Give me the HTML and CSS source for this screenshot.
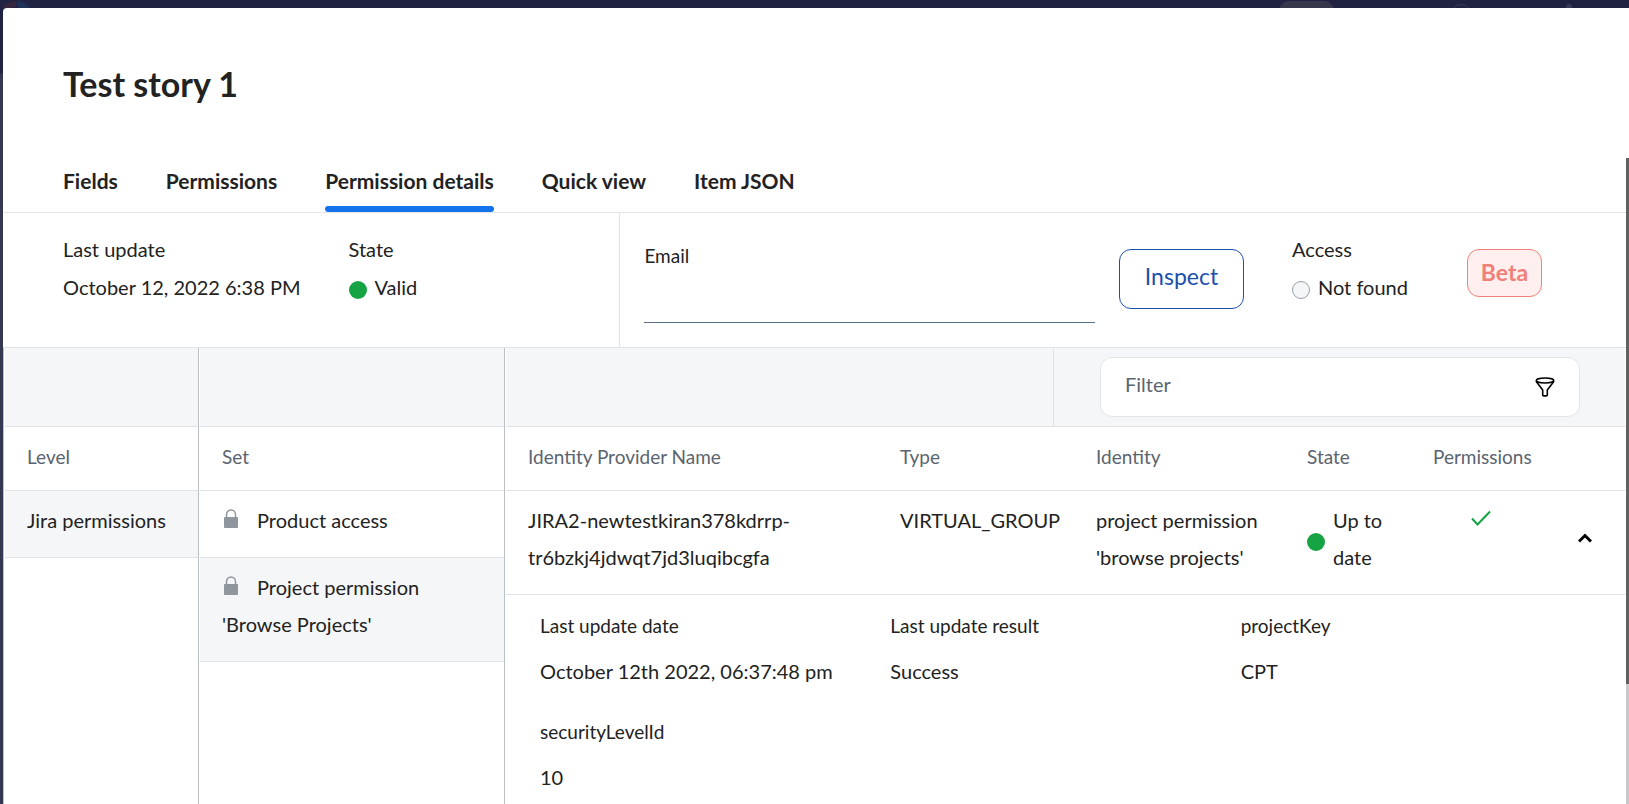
FILE: index.html
```html
<!DOCTYPE html>
<html lang="en">
<head>
<meta charset="utf-8">
<title>Test story 1</title>
<link rel="stylesheet" href="styles.css">
</head>
<body>
<div class="backdrop" aria-hidden="true">
  <svg class="logo" width="32" height="32" viewBox="0 0 32 32" fill="none" stroke-width="6"><path d="M16 4a14 14 0 0 0-13 9" stroke="#38253f"/><path d="M17 4a14 14 0 0 1 12 9" stroke="#1e3258"/></svg>
  <span class="pill"></span>
  <span class="ring"></span>
  <span class="knob"></span>
</div>
<main class="modal">
  <header class="modal-head">
    <h1 class="title">Test story 1</h1>
    <nav class="tabs">
      <button class="tab" type="button">Fields</button>
      <button class="tab" type="button">Permissions</button>
      <button class="tab tab-active" type="button">Permission details</button>
      <button class="tab" type="button">Quick view</button>
      <button class="tab" type="button">Item JSON</button>
    </nav>
  </header>

  <section class="summary">
    <div class="status">
      <div class="fact"><span>Last update</span><span>October 12, 2022 6:38 PM</span></div>
      <div class="fact"><span>State</span><span class="state"><i class="dot dot-ok"></i>Valid</span></div>
    </div>
    <form class="inspect">
      <div class="field">
        <label class="field-label" for="email">Email</label>
        <input class="field-input" id="email" type="email">
      </div>
      <button class="inspect-button" type="button">Inspect</button>
      <div class="fact access"><span>Access</span><span class="state"><i class="dot dot-none"></i>Not found</span></div>
      <span class="beta">Beta</span>
    </form>
  </section>

  <section class="panels">
    <div class="panel">
      <div class="toolbar"></div>
      <table class="grid">
        <thead><tr><th>Level</th></tr></thead>
        <tbody><tr class="selected"><td>Jira permissions</td></tr></tbody>
      </table>
    </div>

    <div class="panel">
      <div class="toolbar"></div>
      <table class="grid">
        <thead><tr><th>Set</th></tr></thead>
        <tbody>
          <tr><td><svg class="lock" viewBox="0 0 14 20" width="14" height="20"><rect x="0" y="8" width="14" height="11" rx="1" fill="#8f969e"/><path d="M2.5 8V5.5a4.500 4.500 0 0 1 9 0V8" fill="none" stroke="#8f969e" stroke-width="1.500"/></svg>Product access</td></tr>
          <tr class="selected"><td><svg class="lock" viewBox="0 0 14 20" width="14" height="20"><rect x="0" y="8" width="14" height="11" rx="1" fill="#8f969e"/><path d="M2.5 8V5.5a4.500 4.500 0 0 1 9 0V8" fill="none" stroke="#8f969e" stroke-width="1.500"/></svg>Project permission 'Browse Projects'</td></tr>
        </tbody>
      </table>
    </div>

    <div class="panel">
      <div class="toolbar">
        <div class="filter-area">
          <div class="filter">
            <input class="filter-input" type="text" placeholder="Filter" aria-label="Filter">
            <svg class="funnel" viewBox="0 0 20 20" width="20" height="20" fill="none" stroke="#000" stroke-width="1.600" stroke-linejoin="round"><ellipse cx="10" cy="3.500" rx="8.700" ry="2.500"/><path d="M1.300 4c0 1 .8 1.900 1.600 2.800L7.700 13v5c0 1.300 4.600 1.300 4.600 0v-5l4.800-6.200c.8-.9 1.600-1.800 1.600-2.800"/></svg>
          </div>
        </div>
      </div>
      <table class="grid identities">
        <colgroup><col><col class="c-type"><col class="c-identity"><col class="c-state"><col class="c-perm"><col class="c-toggle"></colgroup>
        <thead><tr><th>Identity Provider Name</th><th>Type</th><th>Identity</th><th>State</th><th>Permissions</th><th></th></tr></thead>
        <tbody>
          <tr>
            <td>JIRA2-newtestkiran378kdrrp-<br>tr6bzkj4jdwqt7jd3luqibcgfa</td>
            <td>VIRTUAL_GROUP</td>
            <td>project permission 'browse projects'</td>
            <td><span class="state"><i class="dot dot-ok"></i>Up to<br>date</span></td>
            <td class="granted"><svg viewBox="0 0 20 16" width="20" height="16" fill="none" stroke="#16a344" stroke-width="2"><path d="M1 8.500 6.500 14.500 19 1.500"/></svg></td>
            <td class="toggle-cell"><button class="toggle" type="button" aria-label="Collapse"><svg viewBox="0 0 14 10" width="14" height="10" fill="none" stroke="#000" stroke-width="3"><path d="M1 8.500 7 2.500l6 6"/></svg></button></td>
          </tr>
        </tbody>
      </table>
      <dl class="details">
        <div class="detail"><dt>Last update date</dt><dd>October 12th 2022, 06:37:48 pm</dd></div>
        <div class="detail"><dt>Last update result</dt><dd>Success</dd></div>
        <div class="detail"><dt>projectKey</dt><dd>CPT</dd></div>
        <div class="detail"><dt>securityLevelId</dt><dd>10</dd></div>
      </dl>
    </div>
  </section>
</main>
<div class="scrollbar" aria-hidden="true"><div class="scrollbar-thumb"></div></div>
</body>
</html>
```
FILE: styles.css
```css
* { box-sizing: border-box; }

body {
  margin: 0;
  height: 100vh;
  overflow: hidden;
  padding: 8px 0 0 3px;
  display: flex;
  background: linear-gradient(#212343 0, #212343 73px, #353852 74px, #353852 100%);
  font: 20px/38px Lato, "Open Sans", sans-serif;
  color: #222;
}

button, input { font: inherit; color: inherit; }

.backdrop {
  position: absolute;
  inset: 0 0 auto 0;
  height: 8px;
  overflow: hidden;
  background: #212343;
}
.logo { position: absolute; left: 0; top: 0; }
.pill { position: absolute; right: 295px; top: 1px; width: 55px; height: 20px; border-radius: 10px; background: #36374b; }
.ring { position: absolute; right: 157px; top: 4px; width: 22px; height: 22px; border: 1px solid #3a3b58; border-radius: 50%; }
.knob { position: absolute; right: 57px; top: 4px; width: 6px; height: 8px; border-radius: 3px; background: #3a3b58; }

.modal {
  position: relative;
  flex: 1;
  display: flex;
  flex-direction: column;
  background: #fff;
  border-radius: 4px 0 0 0;
  overflow: hidden;
}

.modal-head { padding: 52px 60px 0; border-bottom: 1px solid #e3e6e6; }
.title { margin: 0; font-size: 34px; line-height: 48px; font-weight: 700; }
.tabs { display: flex; gap: 48px; padding-top: 57px; }
.tab {
  padding: 0 0 9px;
  border: 0;
  border-bottom: 6px solid transparent;
  background: none;
  font-size: 21px;
  line-height: 32px;
  font-weight: 700;
  position: relative;
}
.tab-active::after {
  content: "";
  position: absolute;
  inset: auto 0 -6px 0;
  height: 6px;
  border-radius: 3px;
  background: #1472eb;
}

.summary { display: grid; grid-template-columns: 616fr 1009fr; border-bottom: 1px solid #e1e4e6; }
.status { display: flex; gap: 48px; padding: 17px 60px 0; }
.fact { display: flex; flex-direction: column; white-space: nowrap; }
.state { display: flex; align-items: center; gap: 8px; }
.dot { flex: none; width: 18px; height: 18px; margin-top: 6px; border-radius: 50%; }
.dot-ok { background: #16a344; }
.dot-none { background: #f5f6f8; border: 1px solid #9a9fa6; }
.inspect {
  display: flex;
  align-items: flex-start;
  min-height: 134px;
  padding: 17px 87px 0 24px;
  border-left: 1px solid #e1e4e6;
}
.field { flex: 1; display: flex; flex-direction: column; padding-top: 8px; }
.field-label { font-size: 19px; line-height: 36px; }
.field-input { width: 100%; height: 49px; padding: 0; border: 0; border-bottom: 1px solid #5b6f87; background: none; outline: 0; }
.inspect-button {
  margin: 19px 48px 0 24px;
  width: 125px;
  height: 60px;
  padding: 0 0 6px;
  border: 1px solid #1b4fae;
  border-radius: 12px;
  background: #fff;
  color: #1b4fae;
  font-size: 23px;
}
.access { width: 175px; }
.beta {
  margin-top: 19px;
  width: 75px;
  height: 48px;
  border: 1px solid #f08078;
  border-radius: 12px;
  background: #ffefee;
  color: #f08078;
  font-size: 23px;
  line-height: 44px;
  font-weight: 700;
  text-align: center;
}

.panels { flex: 1; display: grid; grid-template-columns: 195fr 306fr 1121fr; padding-right: 4px; }
.panel { min-width: 0; padding-left: 1px; border-left: 1px solid #b9c0c7; }
.toolbar { display: flex; justify-content: flex-end; height: 79px; background: #f5f6f8; border-bottom: 1px solid #e1e4e6; }
.filter-area { width: 572px; padding: 9px 45px 9px 46px; border-left: 1px solid #e1e4e6; }
.filter {
  display: flex;
  align-items: center;
  height: 60px;
  padding: 0 24px;
  border: 1px solid #e3e6e6;
  border-radius: 12px;
  background: #fff;
}
.filter-input { flex: 1; min-width: 0; padding: 0 0 6px; border: 0; outline: 0; background: none; }
.filter-input::placeholder { color: #5b646e; opacity: 1; }

.grid { width: 100%; border-collapse: collapse; table-layout: fixed; line-height: 37px; }
.grid th, .grid td { padding: 11px 16px 18px 22px; border-bottom: 1px solid #e1e4e6; text-align: left; vertical-align: top; }
.grid th { padding-bottom: 15px; font-size: 19px; font-weight: 400; color: #5b646e; }
.selected { background: #f5f6f8; }
.lock { margin: 0 19px 0 2px; vertical-align: -1px; }
.c-type { width: 196px; }
.c-identity { width: 211px; }
.c-state { width: 126px; }
.c-perm { width: 124px; }
.c-toggle { width: 90px; }
.identities .granted { padding: 19px 0 0 60px; line-height: 0; }
.identities .toggle-cell { padding: 42px 0 0 43px; line-height: 0; }
.toggle { padding: 0; border: 0; background: none; line-height: 0; }

.details { display: grid; grid-template-columns: repeat(3, 1fr); row-gap: 24px; margin: 0; padding: 13px 34px 0; }
.detail dt { font-size: 19px; line-height: 36px; }
.detail dd { margin: 8px 0 0; }

.scrollbar { position: absolute; right: 0; top: 158px; bottom: 0; width: 3px; background: #c9c9cb; }
.scrollbar-thumb { height: 526px; background: #5f6060; }
```
